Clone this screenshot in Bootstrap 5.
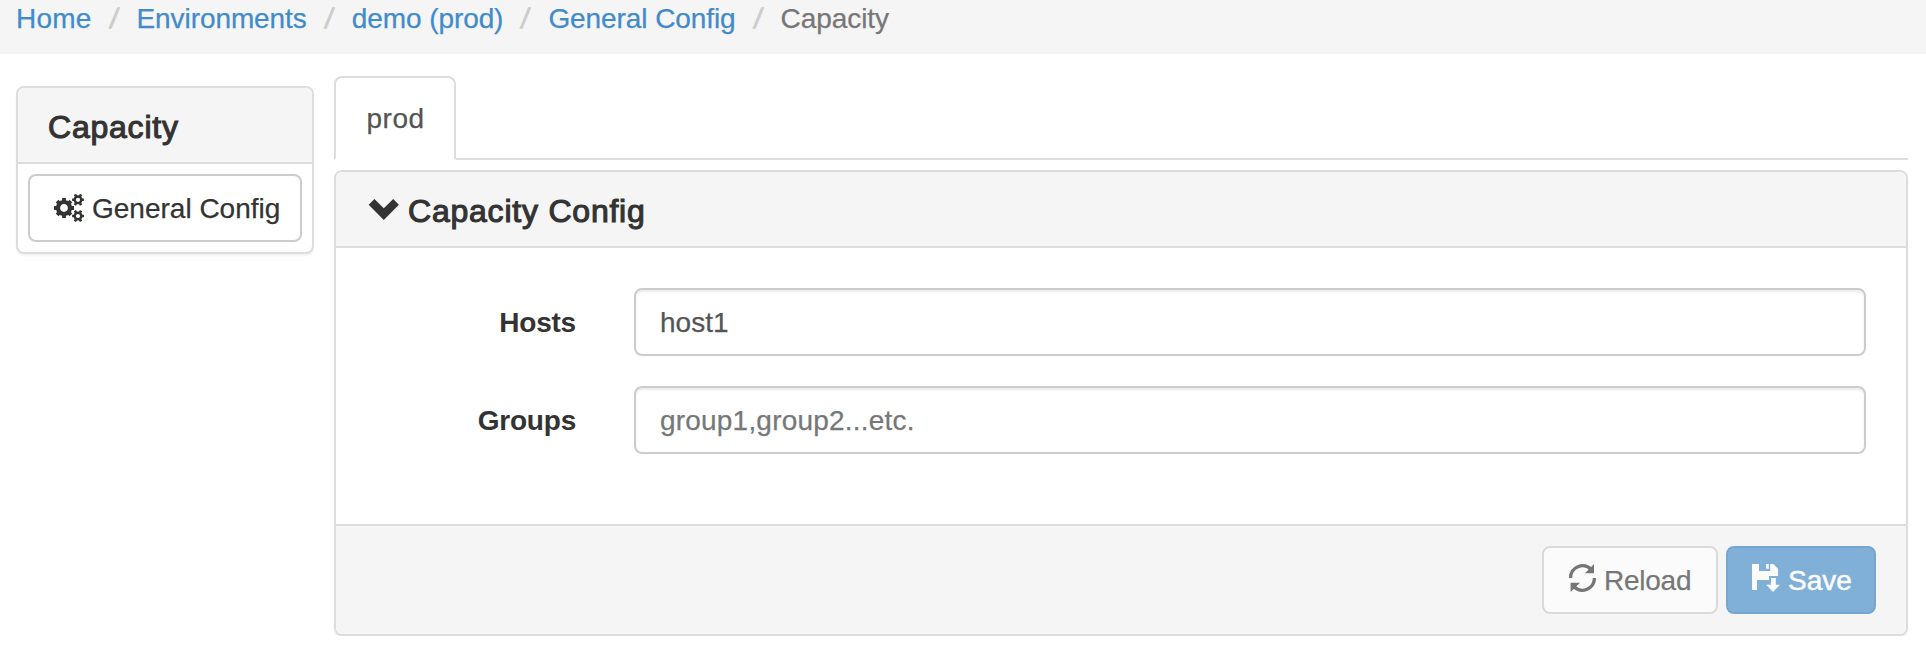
<!DOCTYPE html>
<html lang="en">
<head>
<meta charset="utf-8">
<meta name="viewport" content="width=device-width, initial-scale=1">
<title>Capacity</title>
<link href="https://cdn.jsdelivr.net/npm/bootstrap@5.3.0/dist/css/bootstrap.min.css" rel="stylesheet">
<style>
  body { font-family: "Liberation Sans", Arial, sans-serif; font-size: 28px; line-height: 40px; color: #333; background: #fff; overflow: hidden; -webkit-text-stroke: .25px; }
  .breadcrumb { --bs-breadcrumb-divider-color: #ccc; --bs-breadcrumb-item-active-color: #777; --bs-breadcrumb-item-padding-x: 17px; height: 54px; padding: 0 16px; line-height: 37px; font-size: 28px; background: #f5f5f5; border-radius: 0; letter-spacing: -.08px; }
  .breadcrumb-item:first-child { letter-spacing: .2px; }
  .breadcrumb-item + .breadcrumb-item::before { width: 28px; padding-right: 0; -webkit-text-stroke: .8px; transform: skewX(-8deg); transform-origin: left 28px; }
  .breadcrumb-item a { color: #428bca; text-decoration: none; }
  .page-row { padding: 22px 18px 0 16px; gap: 20px; }
  .side-col { width: 298px; padding-top: 10px; flex: none; }
  .card { border: 2px solid #ddd; border-radius: 8px; box-shadow: 0 2px 2px rgba(0,0,0,.05); --bs-card-inner-border-radius: 6px; color: #333; }
  .card-header { height: 76px; padding: 4px 30px 0; background: #f5f5f5; border-bottom: 2px solid #ddd; }
  .panel-heading-text { font-size: 32px; font-weight: 400; line-height: 36px; letter-spacing: .78px; -webkit-text-stroke: 1.1px #333; margin: 0; }
  .chevron { margin: -3px 5px 0 0; }
  .side-body { padding: 10px; }
  .btn { --bs-btn-font-size: 28px; --bs-btn-line-height: 40px; --bs-btn-disabled-opacity: .65; height: 68px; padding: 0 0 0 24px; border-width: 2px; border-radius: 8px; display: flex; align-items: center; white-space: nowrap; }
  .btn span { padding-top: 1px; }
  .btn-plain, .btn-plain:disabled { color: #333; background: #fff; border-color: #ccc; }
  .btn-primary, .btn-primary:disabled { color: #fff; background: #428bca; border-color: #357ebd; -webkit-text-stroke: .5px; }
  .btn-reload { width: 176px; letter-spacing: -.25px; }
  .btn-save { width: 150px; }
  .btn:disabled svg { margin-top: -4px; }
  .nav-tabs { --bs-nav-tabs-border-width: 2px; --bs-nav-tabs-border-color: #ddd; --bs-nav-tabs-border-radius: 8px; height: 84px; margin-bottom: 10px; }
  .nav-tabs .nav-link { width: 122px; height: 84px; padding: 21px 0 0 30.5px; --bs-nav-tabs-link-active-border-color: #ddd #ddd #fff; --bs-nav-tabs-link-active-color: #555; letter-spacing: .5px; }
  .card-body { height: 276px; padding: 40px 40px 0; }
  .field-row { gap: 58px; margin-bottom: 30px; }
  .field-row label { width: 200px; padding-top: 1px; text-align: right; font-weight: 700; flex: none; letter-spacing: -.2px; -webkit-text-stroke: 0; }
  .form-control, .form-control:focus { height: 68px; padding: 13px 24px 11px; font-size: 28px; line-height: 40px; color: #555; border: 2px solid #ccc; border-radius: 8px; box-shadow: inset 0 2px 2px rgba(0,0,0,.075); -webkit-text-stroke: .25px; }
  .form-control::placeholder { color: #777; opacity: 1; letter-spacing: .2px; }
  .card-footer { height: 110px; padding: 20px 30px; gap: 8px; background: #f5f5f5; border-top: 2px solid #ddd; }
  svg { flex: none; display: block; }
</style>
</head>
<body>
<nav aria-label="breadcrumb">
  <ol class="breadcrumb mb-0 flex-nowrap">
    <li class="breadcrumb-item"><a href="#">Home</a></li>
    <li class="breadcrumb-item"><a href="#">Environments</a></li>
    <li class="breadcrumb-item"><a href="#">demo (prod)</a></li>
    <li class="breadcrumb-item"><a href="#">General Config</a></li>
    <li class="breadcrumb-item active" aria-current="page">Capacity</li>
  </ol>
</nav>
<div class="page-row d-flex align-items-start">
  <aside class="side-col">
    <div class="card">
      <div class="card-header d-flex align-items-center"><h3 class="panel-heading-text">Capacity</h3></div>
      <div class="side-body">
        <button class="btn btn-plain w-100" type="button">
          <svg width="30" height="28" viewBox="0 0 30 28" class="me-2" aria-hidden="true">
            <defs>
              <g id="cog8" fill="none" stroke="currentColor" stroke-width="3.8"><circle r="6" stroke-width="4.2"/><path d="M-6.9 0h-3.1M6.9 0h3.1M0-6.9v-3.1M0 6.9v3.1"/><path d="M-6.9 0h-2.9M6.9 0h2.9M0-6.9v-2.9M0 6.9v2.9" transform="rotate(45)"/></g>
              <g id="cog6" fill="none" stroke="currentColor" stroke-width="2.6"><circle r="3.3" stroke-width="2.4"/><path d="M-3.6 0h-2.3M3.6 0h2.3"/><path d="M-3.6 0h-2.6M3.6 0h2.6" transform="rotate(60)"/><path d="M-3.6 0h-2.6M3.6 0h2.6" transform="rotate(120)"/></g>
            </defs>
            <use href="#cog8" x="10" y="14"/><use href="#cog6" x="24" y="5.8"/><use href="#cog6" x="24" y="22"/>
          </svg>
          <span>General Config</span>
        </button>
      </div>
    </div>
  </aside>
  <main class="flex-grow-1">
    <ul class="nav nav-tabs">
      <li class="nav-item"><a class="nav-link active" href="#">prod</a></li>
    </ul>
    <div class="card">
      <div class="card-header d-flex align-items-center">
        <svg width="37" height="22" viewBox="0 0 37 22" class="chevron" aria-hidden="true"><path d="M2.700 5.700 8.400 0l9.400 9.200L27.200 0l5.700 5.700L17.800 21z" fill="currentColor"/></svg>
        <h3 class="panel-heading-text">Capacity Config</h3>
      </div>
      <form class="card-body">
        <div class="field-row d-flex align-items-center">
          <label for="hosts">Hosts</label>
          <input id="hosts" class="form-control" type="text" value="host1">
        </div>
        <div class="field-row d-flex align-items-center">
          <label for="groups">Groups</label>
          <input id="groups" class="form-control" type="text" placeholder="group1,group2...etc.">
        </div>
      </form>
      <div class="card-footer d-flex justify-content-end">
        <button class="btn btn-plain btn-reload" type="button" disabled>
          <svg width="28" height="28" viewBox="0 0 28 28" class="me-2" aria-hidden="true"><g fill="none" stroke="currentColor" stroke-width="3.300"><path d="M2.600 14A12 12 0 0 1 23 5.300"/><path d="M26.400 14A12 12 0 0 1 6 22.700"/></g><path d="M26 0v9.300H17zM2.600 28v-9.300H12z" fill="currentColor"/></svg>
          <span>Reload</span>
        </button>
        <button class="btn btn-primary btn-save" type="button" disabled>
          <svg width="28" height="28" viewBox="0 0 28 28" class="me-2" aria-hidden="true"><path d="M0 0h7v7h13V0h1.300l4.700 4.700V12h-9v4H5v10H0zM11.500 0v0zM14 0h2.800v4.700H14zM18.200 0h3.100v7h-3.100zM19 14h4.800v6.800H28L21 28l-6.800-7.200H19z" fill="currentColor"/></svg>
          <span>Save</span>
        </button>
      </div>
    </div>
  </main>
</div>
<script src="https://cdn.jsdelivr.net/npm/bootstrap@5.3.0/dist/js/bootstrap.bundle.min.js"></script>
</body>
</html>
